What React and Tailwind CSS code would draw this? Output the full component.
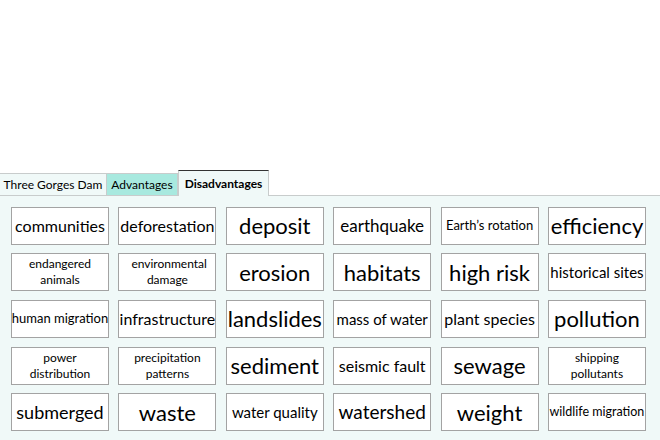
const cards = [
  { t: "communities", s: 16 },
  { t: "deforestation", s: 16 },
  { t: "deposit", s: 22 },
  { t: "earthquake", s: 17 },
  { t: "Earth’s rotation", s: 13 },
  { t: "efficiency", s: 22 },
  { t: "endangered animals", s: 12, two: true },
  { t: "environmental damage", s: 12, two: true },
  { t: "erosion", s: 22 },
  { t: "habitats", s: 22 },
  { t: "high risk", s: 22 },
  { t: "historical sites", s: 15 },
  { t: "human migration", s: 13 },
  { t: "infrastructure", s: 16 },
  { t: "landslides", s: 22 },
  { t: "mass of water", s: 15 },
  { t: "plant species", s: 16 },
  { t: "pollution", s: 22 },
  { t: "power distribution", s: 12, two: true },
  { t: "precipitation patterns", s: 12, two: true },
  { t: "sediment", s: 22 },
  { t: "seismic fault", s: 16 },
  { t: "sewage", s: 22 },
  { t: "shipping pollutants", s: 12, two: true },
  { t: "submerged", s: 18 },
  { t: "waste", s: 22 },
  { t: "water quality", s: 15 },
  { t: "watershed", s: 19 },
  { t: "weight", s: 22 },
  { t: "wildlife migration", s: 12.5 },
];

const sizeClass = {
  12: "text-[12px] leading-[16px]",
  12.5: "text-[12.5px]",
  13: "text-[13px]",
  15: "text-[15px]",
  16: "text-[16px]",
  17: "text-[17px]",
  18: "text-[18px]",
  19: "text-[19px]",
  22: "text-[22px]",
};

export default function App() {
  return (
    <div
      className="w-[660px] h-[440px] bg-white overflow-hidden flex flex-col text-black"
      style={{ fontFamily: "Lato, 'Open Sans', sans-serif" }}
    >
      <div className="h-[170px] shrink-0" />

      {/* tabs */}
      <div className="flex items-end h-[25px] shrink-0 relative z-10 text-[12px] whitespace-nowrap">
        <div className="h-[22px] w-[107px] flex items-center justify-center bg-[#f0f9f8] border-t border-r border-[#c8cccc]">
          Three Gorges Dam
        </div>
        <div className="h-[22px] w-[71px] flex items-center justify-center bg-[#a8e9df] border-t border-r border-[#c8cccc]">
          Advantages
        </div>
        <div className="h-[26px] w-[91px] -mb-px flex items-center justify-center bg-[#f0f9f8] border-t border-t-[#333] border-x border-x-[#c8cccc] font-bold">
          Disadvantages
        </div>
      </div>

      {/* panel */}
      <div className="flex-1 bg-[#f0f9f8] border-t border-[#c8cccc] pl-[11px] pt-[10.5px]">
        <div className="grid grid-cols-[repeat(6,98px)] auto-rows-[38px] gap-x-[9.4px] gap-y-[8.7px]">
          {cards.map((c) => (
            <div
              key={c.t}
              className={`bg-white border border-[#a3a3a3] flex items-center justify-center text-center whitespace-nowrap overflow-hidden ${sizeClass[c.s]}`}
            >
              {c.two ? (
                <span className="whitespace-normal px-1 w-[80px]">{c.t}</span>
              ) : (
                c.t
              )}
            </div>
          ))}
        </div>
      </div>
    </div>
  );
}
